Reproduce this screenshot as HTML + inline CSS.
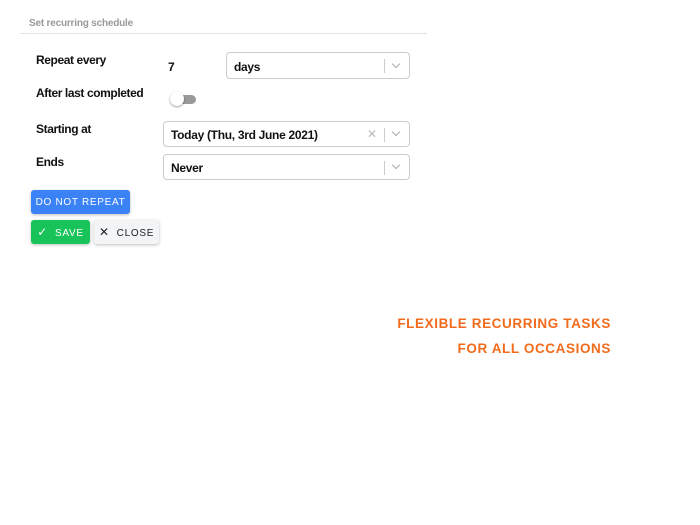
<!DOCTYPE html>
<html><head><style>
body{margin:0;width:700px;height:525px;background:#fff;font-family:"Liberation Sans",sans-serif;position:relative;overflow:hidden}
.a{position:absolute}
.lbl{font-size:12px;font-weight:bold;color:#111;letter-spacing:-0.4px}
.sel{position:absolute;border:1px solid #ccc;border-radius:4px;height:25px;box-sizing:border-box;background:#fff}
.sel .t{position:absolute;left:7px;top:5px;font-size:12px;font-weight:bold;color:#111;letter-spacing:-0.3px}
.sep{position:absolute;top:5px;width:1px;height:14px;background:#ccc}
.chev{position:absolute;top:7px;width:5px;height:5px;border-right:1px solid #aaa;border-bottom:1px solid #aaa;transform:rotate(45deg)}
.btn{position:absolute;border-radius:3px;font-size:10px;letter-spacing:0.7px;text-align:center;box-shadow:0 1px 3px rgba(0,0,0,.25);font-weight:bold;-webkit-text-stroke:0}
.o{position:absolute;right:89px;color:#f26b1d;font-weight:bold;font-size:13.5px;letter-spacing:0.6px}
</style></head><body>
<div class="a" style="left:29px;top:18px;font-size:10px;font-weight:bold;color:#999;letter-spacing:-0.2px">Set recurring schedule</div>
<div class="a" style="left:20px;top:33px;width:407px;height:1px;background:#e3e3e3"></div>
<div class="a lbl" style="left:36px;top:53px">Repeat every</div>
<div class="a lbl" style="left:168px;top:60px">7</div>
<div class="sel" style="left:226px;top:52px;width:184px;height:27px"><div class="t" style="top:7px">days</div><div class="sep" style="left:157px;top:6px"></div><div class="chev" style="left:166px;top:8px"></div></div>
<div class="a lbl" style="left:36px;top:86px">After last completed</div>
<div class="a" style="left:174px;top:95px;width:22px;height:9px;border-radius:5px;background:#9a9a9a"></div>
<div class="a" style="left:170px;top:92px;width:14px;height:14px;border-radius:50%;background:#fff;box-shadow:0 1px 2px rgba(0,0,0,.4)"></div>
<div class="a lbl" style="left:36px;top:122px">Starting at</div>
<div class="sel" style="left:163px;top:121px;width:247px;height:26px"><div class="t" style="top:6px">Today (Thu, 3rd June 2021)</div><div class="a" style="left:203px;top:5px;font-size:12px;color:#bbb">✕</div><div class="sep" style="left:220px;top:6px"></div><div class="chev" style="left:229px;top:7px"></div></div>
<div class="a lbl" style="left:36px;top:155px">Ends</div>
<div class="sel" style="left:163px;top:154px;width:247px;height:26px"><div class="t" style="top:6px">Never</div><div class="sep" style="left:220px;top:6px"></div><div class="chev" style="left:229px;top:7px"></div></div>
<div class="btn" style="left:31px;top:190px;width:99px;height:24px;line-height:25px;background:#3b82f6;color:#fff;font-weight:normal">DO NOT REPEAT</div>
<div class="btn" style="left:31px;top:220px;width:59px;height:24px;line-height:25px;background:#18c45a;color:#fff;font-weight:normal"><span style="font-size:12px">✓</span>&nbsp; SAVE</div>
<div class="btn" style="left:94px;top:220px;width:65px;height:24px;line-height:25px;background:#f3f4f6;color:#222;font-weight:normal"><span style="font-size:12px">✕</span>&nbsp; CLOSE</div>
<div class="o" style="top:316px">FLEXIBLE RECURRING TASKS</div>
<div class="o" style="top:341px">FOR ALL OCCASIONS</div>
</body></html>
